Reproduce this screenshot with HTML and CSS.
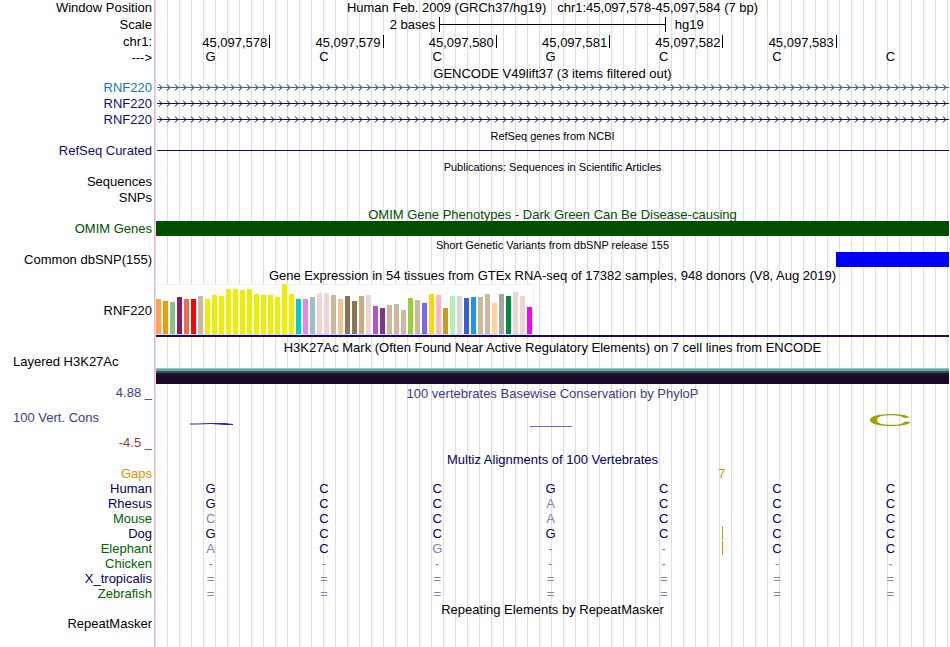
FILE: index.html
```
<!DOCTYPE html>
<html lang="en">
<head>
  <meta charset="UTF-8">
  <meta name="viewport" content="width=device-width, initial-scale=1.0">
  <title>Human chr1:45,097,578-45,097,584 - Genome Browser</title>
  <link rel="stylesheet" href="styles.css">
</head>
<body>
  <main class="browser">
    <div class="row">
      <div class="label">Window Position</div>
      <div class="track title">Human Feb. 2009 (GRCh37/hg19) &nbsp; chr1:45,097,578-45,097,584 (7 bp)</div>
    </div>
    <div class="row scale-row">
      <div class="label">Scale</div>
      <div class="track scale">
        <span class="scale-size">2 bases</span>
        <span class="scale-bar"></span>
        <span class="scale-db">hg19</span>
      </div>
    </div>
    <div class="row">
      <div class="label">chr1:</div>
      <div class="track bases ruler">
        <span>45,097,578</span><span>45,097,579</span><span>45,097,580</span><span>45,097,581</span><span>45,097,582</span><span>45,097,583</span>
      </div>
    </div>
    <div class="row">
      <div class="label">---&gt;</div>
      <div class="track bases letters">
        <span>G</span><span>C</span><span>C</span><span>G</span><span>C</span><span>C</span><span>C</span>
      </div>
    </div>

    <!-- GENCODE -->
    <h2 class="title short">GENCODE V49lift37 (3 items filtered out)</h2>
    <div class="row sky">
      <div class="label">RNF220</div>
      <div class="track"><svg class="intron"><use href="#arrows"/></svg></div>
    </div>
    <div class="row navy">
      <div class="label">RNF220</div>
      <div class="track"><svg class="intron"><use href="#arrows"/></svg></div>
    </div>
    <div class="row navy">
      <div class="label">RNF220</div>
      <div class="track"><svg class="intron"><use href="#arrows"/></svg></div>
    </div>

    <!-- RefSeq -->
    <h2 class="title small">RefSeq genes from NCBI</h2>
    <div class="row navy refseq-row">
      <div class="label">RefSeq Curated</div>
      <div class="track"><div class="line"></div></div>
    </div>

    <!-- Publications -->
    <h2 class="title small low">Publications: Sequences in Scientific Articles</h2>
    <div class="row"><div class="label">Sequences</div></div>
    <div class="row"><div class="label">SNPs</div></div>

    <!-- OMIM -->
    <h2 class="title thin low green">OMIM Gene Phenotypes - Dark Green Can Be Disease-causing</h2>
    <div class="row item-row green">
      <div class="label">OMIM Genes</div>
      <div class="track omim"></div>
    </div>

    <!-- dbSNP -->
    <h2 class="title small low">Short Genetic Variants from dbSNP release 155</h2>
    <div class="row item-row">
      <div class="label">Common dbSNP(155)</div>
      <div class="track bases"><span class="snp"></span></div>
    </div>

    <!-- GTEx -->
    <h2 class="title low">Gene Expression in 54 tissues from GTEx RNA-seq of 17382 samples, 948 donors (V8, Aug 2019)</h2>
    <div class="row gtex-row">
      <div class="label">RNF220</div>
      <div class="track gtex"><div class="gtex-chart" id="gtex"></div></div>
    </div>

    <!-- H3K27Ac -->
    <h2 class="title tall">H3K27Ac Mark (Often Found Near Active Regulatory Elements) on 7 cell lines from ENCODE</h2>
    <div class="row h3k-row">
      <div class="label left">Layered H3K27Ac</div>
      <div class="track h3k"></div>
    </div>

    <!-- PhyloP -->
    <div class="row phylop-row">
      <div class="label limits">
        <span class="max">4.88 _</span>
        <span class="name">100 Vert. Cons</span>
        <span class="min">-4.5 _</span>
      </div>
      <div class="track phylop">
        <h2 class="title">100 vertebrates Basewise Conservation by PhyloP</h2>
        <div class="bases logo">
          <svg viewBox="0 0 44 24"><path d="M1 13.500H8L22 13H36L44 14V15H36L22 14L8 14.500H1Z" fill="#1e1eff"/></svg>
          <i></i>
          <i></i>
          <svg viewBox="0 0 44 24"><path d="M1 16H43V17H1Z" fill="#6464ff"/></svg>
          <i></i>
          <i></i>
          <svg viewBox="0 0 44 24"><path d="M41 7.500C38 5 31 4 23 4C10 4 1 6 1 10C1 14 10 16 23 16C32 16 39 15 42 12L36 11.500C34 14 29 14.800 23 14.800C13 14.800 8 13.500 8 10C8 6.500 13 5.200 23 5.200C29 5.200 33 6 35 8Z" fill="#a0a000"/></svg>
        </div>
      </div>
    </div>

    <!-- Multiz -->
    <h2 class="title short indigo">Multiz Alignments of 100 Vertebrates</h2>
    <table class="multiz">
      <tr class="gaps"><th>Gaps</th><td colspan="4"></td><td colspan="2">7</td><td></td></tr>
      <tr><th>Human</th><td>G</td><td>C</td><td>C</td><td>G</td><td>C</td><td>C</td><td>C</td></tr>
      <tr><th>Rhesus</th><td>G</td><td>C</td><td>C</td><td class="diff">A</td><td>C</td><td>C</td><td>C</td></tr>
      <tr><th class="alt">Mouse</th><td class="diff">C</td><td>C</td><td>C</td><td class="diff">A</td><td>C</td><td>C</td><td>C</td></tr>
      <tr><th>Dog</th><td>G</td><td>C</td><td>C</td><td>G</td><td>C</td><td class="insert">C</td><td>C</td></tr>
      <tr><th class="alt">Elephant</th><td class="diff">A</td><td>C</td><td class="diff">G</td><td class="diff">-</td><td class="diff">-</td><td class="insert">C</td><td>C</td></tr>
      <tr class="diff"><th class="alt">Chicken</th><td>-</td><td>-</td><td>-</td><td>-</td><td>-</td><td>-</td><td>-</td></tr>
      <tr class="diff"><th>X_tropicalis</th><td>=</td><td>=</td><td>=</td><td>=</td><td>=</td><td>=</td><td>=</td></tr>
      <tr class="diff"><th class="alt">Zebrafish</th><td>=</td><td>=</td><td>=</td><td>=</td><td>=</td><td>=</td><td>=</td></tr>
    </table>

    <!-- RepeatMasker -->
    <h2 class="title thin low">Repeating Elements by RepeatMasker</h2>
    <div class="row"><div class="label">RepeatMasker</div></div>
  </main>

  <svg class="defs">
    <defs>
      <pattern id="chevron" width="8" height="7" patternUnits="userSpaceOnUse">
        <path d="M3 0.500L6 3.500L3 6.500" fill="none" stroke="currentColor"/>
      </pattern>
      <g id="arrows">
        <rect width="100%" height="7" fill="url(#chevron)"/>
        <rect x="1" y="3" width="100%" height="1" fill="currentColor"/>
      </g>
    </defs>
  </svg>

  <script>
    // [colour, bar height] per tissue
    const tissues = [
      ["#ffa54f", 35], ["#ee9a00", 33], ["#8fbc8f", 32], ["#8b1c62", 37], ["#ee6a50", 35], ["#ff0000", 35],
      ["#cdb79e", 38], ["#eeee00", 35], ["#eeee00", 39], ["#eeee00", 38], ["#eeee00", 45], ["#eeee00", 45],
      ["#eeee00", 44], ["#eeee00", 45], ["#eeee00", 40], ["#eeee00", 39], ["#eeee00", 39], ["#eeee00", 37],
      ["#eeee00", 50], ["#eeee00", 40], ["#00cdcd", 35], ["#ee82ee", 35], ["#9ac0cd", 37], ["#eed5d2", 41],
      ["#eed5d2", 41], ["#cdb79e", 39], ["#eec591", 35], ["#8b7355", 38], ["#8b7355", 33], ["#cdaa7d", 38],
      ["#eed5d2", 39], ["#b452cd", 28], ["#7a378b", 26], ["#cdb79e", 29], ["#cdb79e", 30], ["#cdb79e", 24],
      ["#9acd32", 36], ["#cdb79e", 34], ["#7a67ee", 31], ["#ffd700", 40], ["#ffb6c1", 39], ["#cd9b1d", 26],
      ["#b4eeb4", 38], ["#d9d9d9", 38], ["#3a5fcd", 36], ["#1e90ff", 37], ["#cdb79e", 37], ["#cdb79e", 40],
      ["#ffd39b", 31], ["#a6a6a6", 40], ["#008b45", 38], ["#eed5d2", 42], ["#eed5d2", 38], ["#ff00ff", 27]
    ];
    const chart = document.getElementById("gtex");
    tissues.forEach(([colour, height]) => {
      const bar = document.createElement("span");
      bar.style.background = colour;
      bar.style.height = height + "px";
      chart.appendChild(bar);
    });
  </script>
</body>
</html>
```
FILE: styles.css
```
* {
  box-sizing: border-box;
}
body {
  margin: 0;
  font-family: "Liberation Sans", Arial, sans-serif;
  font-size: 13px;
  line-height: 16px;
  color: #000;
  background: #fff;
}
.browser {
  min-height: 100vh;
  padding-right: 1px;
  /* label edge, then a guide line every 12px */
  background:
    linear-gradient(#ffb4b4, #ffb4b4) 154px 0 / 1px 100% no-repeat,
    linear-gradient(90deg, #fff 155px, transparent 155px),
    repeating-linear-gradient(90deg, transparent 0 11px, #dcdcf5 11px 12px);
}
.row {
  display: grid;
  grid-template-columns: 156px 1fr;
  height: 16px;
}
.label {
  padding-right: 4px;
  text-align: right;
  white-space: nowrap;
}
.track {
  min-width: 0;
}
.title {
  height: 16px;
  margin: 0;
  font-size: 13px;
  font-weight: normal;
  text-align: center;
  white-space: nowrap;
}
h2.title {
  padding-left: 156px;
}
.title.small {
  font-size: 11px;
}
.title.short {
  height: 14px;
}
.title.thin {
  height: 15px;
}
.title.low {
  line-height: 18px;
}
.title.tall {
  height: 18px;
  line-height: 22px;
}
.sky {
  color: #0c78b4;
}
.navy {
  color: #0c0c78;
}
.green {
  color: #005000;
}
.indigo {
  color: #000064;
}

/* ruler */
.scale-row {
  height: 18px;
  line-height: 18px;
}
.scale {
  display: grid;
  grid-template-columns: 5fr 4fr 5fr;
}
.scale-size {
  padding-right: 4px;
  text-align: right;
}
.scale-bar {
  height: 15px;
  margin-top: 1px;
  border: solid #000;
  border-width: 0 1px;
  background: linear-gradient(#000, #000) 0 7px / 100% 1px no-repeat;
}
.scale-db {
  padding-left: 9px;
}
.bases {
  display: grid;
  grid-template-columns: repeat(7, 1fr);
}
.ruler span {
  height: 13px;
  margin: 1px -1px 0 0;
  padding-right: 2px;
  border-right: 1px solid #000;
  text-align: right;
}
.letters span {
  padding-right: 4px;
  line-height: 14px;
  text-align: center;
}

/* gene tracks */
.intron {
  display: block;
  width: 100%;
  height: 7px;
  margin-top: 4px;
}
.refseq-row {
  height: 14px;
  line-height: 14px;
}
.line {
  height: 1px;
  margin: 6px 0 0 1px;
  background: #0c0c78;
}
.item-row {
  height: 15px;
  line-height: 15px;
}
.omim {
  background: #005000;
}
.snp {
  grid-column: 7;
  background: #0000ff;
}

/* expression chart */
.gtex-row {
  height: 54px;
}
.gtex-row .label {
  padding-top: 20px;
}
.gtex {
  border-bottom: 2px solid #0c0c78;
}
.gtex-chart {
  display: flex;
  align-items: flex-end;
  gap: 2px;
  width: 378px;
  height: 51px;
  margin-top: 1px;
  border-top: 1px solid #f0f0f0;
  border-right: 1px solid #f0f0f0;
  border-bottom: 1px solid #dcdcdc;
  background: #fff;
}
.gtex-chart span {
  width: 5px;
}

/* signal tracks */
.h3k-row {
  height: 29px;
}
.label.left {
  padding-left: 13px;
  line-height: 14px;
  text-align: left;
}
.h3k {
  margin-top: 13px;
  background: linear-gradient(#78c8f0 1px, #78aa78 1px 3px, #28507a 3px 5px, #1e1428 5px 7px, #190a28 7px);
}
.phylop-row {
  height: 68px;
}
.limits {
  display: flex;
  flex-direction: column;
  justify-content: space-between;
  padding-top: 1px;
  padding-bottom: 1px;
  color: #3c3c8c;
}
.limits .name {
  padding-left: 13px;
  text-align: left;
}
.limits .min {
  color: #8c3c3c;
}
.phylop .title {
  padding: 0;
  line-height: 20px;
  color: #3c3c8c;
}
.logo {
  margin-top: 10px;
}
.logo svg {
  width: 44px;
  height: 24px;
  margin-left: 33px;
}

/* alignment */
.multiz {
  width: 100%;
  table-layout: fixed;
  border-collapse: separate;
  border-spacing: 0;
  line-height: 15px;
  color: #000064;
}
.multiz th {
  width: 156px;
  padding: 0 4px 0 0;
  font-weight: normal;
  text-align: right;
}
.multiz td {
  height: 15px;
  padding: 0 4px 0 0;
  text-align: center;
}
.multiz .alt {
  color: #006400;
}
.multiz td.diff,
.multiz .diff td {
  color: #8282b4;
}
.multiz .gaps th,
.multiz .gaps td {
  color: #f08c00;
}
.multiz .gaps td {
  padding: 0 1px 0 0;
}
.multiz .insert {
  background: linear-gradient(#f08c00, #f08c00) 0 0 / 1px 14px no-repeat;
}
.defs {
  position: absolute;
  width: 0;
  height: 0;
}
```
